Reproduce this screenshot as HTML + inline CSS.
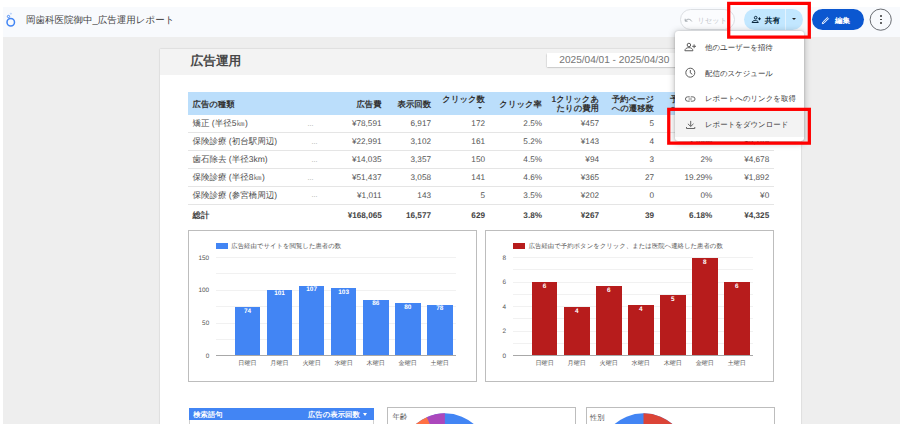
<!DOCTYPE html>
<html lang="ja">
<head>
<meta charset="utf-8">
<title>岡歯科医院御中_広告運用レポート</title>
<style>
*{margin:0;padding:0;box-sizing:border-box}
html,body{width:903px;height:424px;overflow:hidden;background:#fff}
body{position:relative;font-family:"Liberation Sans",sans-serif;color:#555;text-rendering:geometricPrecision}
.a{position:absolute}
.t{position:absolute;white-space:nowrap;height:12px;line-height:12px}
.r{text-align:right}
.b{font-weight:bold}
#hdr{left:3px;top:7px;width:897px;height:30px;background:#f8fafd}
#bg{left:3px;top:37px;width:897px;height:387px;background:#eeeeee}
#page{left:160px;top:49px;width:641.2px;height:380px;background:#fff;box-shadow:0 0 1.5px rgba(0,0,0,.22)}
#band{left:160px;top:49px;width:641.2px;height:25.5px;background:#f3f3f3}
/* table */
.th{font-size:8.4px;font-weight:bold;color:#333}
.td{font-size:8.5px;color:#4d4d4d}
.n{font-size:8.2px;color:#555}
.tot{font-size:8.2px;color:#444;font-weight:bold}
.sep{position:absolute;left:188px;width:586px;height:1px;background:#e5e5e5}
.dots{font-size:7px;color:#999}
/* charts */
.box{position:absolute;border:1px solid #bdbdbd;background:#fff}
.gl{position:absolute;height:1px;background:#f1f1f1}
.ax{font-size:6.4px;color:#555}
.bar1{position:absolute;background:#4285f4;width:25.5px}
.bar2{position:absolute;background:#b71c1c;width:25.5px}
.bl{position:absolute;font-size:6.4px;font-weight:bold;color:#fff;width:25.5px;text-align:center;height:8px;line-height:8px;white-space:nowrap}
.xl{position:absolute;font-size:6.1px;color:#555;width:32px;text-align:center;height:8px;line-height:8px;white-space:nowrap}
/* menu */
#menu{left:675px;top:30.8px;width:128.7px;height:110.7px;background:#fff;border-radius:3px;box-shadow:0 1.5px 7px rgba(0,0,0,.3),0 0 1.5px rgba(0,0,0,.22)}
.mi{font-size:7.45px;color:#383838;left:705px}
</style>
</head>
<body>
<div class="a" id="hdr"></div>
<div class="a" id="bg"></div>

<!-- header: logo + title -->
<svg class="a" style="left:4px;top:11px" width="16" height="18" viewBox="0 0 16 18">
  <circle cx="6.75" cy="11.2" r="3.75" fill="none" stroke="#4285f4" stroke-width="1.5"/>
  <circle cx="4.5" cy="5.5" r="1.15" fill="none" stroke="#4a8af4" stroke-width="1"/>
  <circle cx="6.9" cy="2.7" r="0.6" fill="none" stroke="#8ab4f8" stroke-width="0.55"/>
</svg>
<div class="t" style="left:26px;top:15px;font-size:9.5px;color:#444">岡歯科医院御中_広告運用レポート</div>

<!-- page -->
<div class="a" id="page"></div>
<div class="a" id="band"></div>
<div class="t b" style="left:190.5px;top:54.6px;font-size:12.7px;color:#484848">広告運用</div>
<div class="a" style="left:547.2px;top:53.3px;width:150px;height:13.3px;background:#fff;box-shadow:0 .5px 1.5px rgba(0,0,0,.4)"></div>
<div class="t" style="left:559.3px;top:54.5px;font-size:10.1px;color:#757575">2025/04/01 - 2025/04/30</div>

<!-- table 1 -->
<div class="a" style="left:188px;top:92px;width:586px;height:23px;background:#bbdefb"></div>
<div class="t th" style="left:192.5px;top:97.5px">広告の種類</div>
<div class="t th r" style="left:281.5px;width:100px;top:97.5px">広告費</div>
<div class="t th r" style="left:331px;width:100px;top:97.5px">表示回数</div>
<div class="t th r" style="left:385px;width:100px;top:93.2px">クリック数</div>
<div class="a" style="left:478px;top:106.6px;width:0;height:0;border-left:2.1px solid transparent;border-right:2.1px solid transparent;border-top:2.4px solid #333"></div>
<div class="t th r" style="left:442px;width:100px;top:97.5px">クリック率</div>
<div class="t th r" style="left:499px;width:100px;top:93.2px">1クリックあ</div>
<div class="t th r" style="left:499px;width:100px;top:101.9px">たりの費用</div>
<div class="t th r" style="left:554px;width:100px;top:93.2px">予約ページ</div>
<div class="t th r" style="left:554px;width:100px;top:101.9px">への遷移数</div>
<div class="t th r" style="left:612.3px;width:100px;top:93.2px">予約ページ</div>
<div class="t th r" style="left:612.3px;width:100px;top:101.9px">への遷移率</div>
<div class="t th r" style="left:669.2px;width:100px;top:93.2px">予約1件あ</div>
<div class="t th r" style="left:669.2px;width:100px;top:101.9px">たりの費用</div>

<!-- row 1 -->
<div class="t td" style="left:192.5px;top:117.1px">矯正 (半径5㎞)</div>
<div class="t dots" style="left:307.6px;top:118.8px">...</div>
<div class="t n r" style="left:281.5px;width:100px;top:117.8px">¥78,591</div>
<div class="t n r" style="left:331px;width:100px;top:117.8px">6,917</div>
<div class="t n r" style="left:385px;width:100px;top:117.8px">172</div>
<div class="t n r" style="left:442px;width:100px;top:117.8px">2.5%</div>
<div class="t n r" style="left:499px;width:100px;top:117.8px">¥457</div>
<div class="t n r" style="left:554px;width:100px;top:117.8px">5</div>
<div class="t n r" style="left:612.3px;width:100px;top:117.8px">2.91%</div>
<div class="t n r" style="left:669.2px;width:100px;top:117.8px">¥15,718</div>
<div class="sep" style="top:132.3px"></div>
<!-- row 2 -->
<div class="t td" style="left:192.5px;top:135px">保険診療 (初台駅周辺)</div>
<div class="t dots" style="left:311.6px;top:136.7px">...</div>
<div class="t n r" style="left:281.5px;width:100px;top:135.7px">¥22,991</div>
<div class="t n r" style="left:331px;width:100px;top:135.7px">3,102</div>
<div class="t n r" style="left:385px;width:100px;top:135.7px">161</div>
<div class="t n r" style="left:442px;width:100px;top:135.7px">5.2%</div>
<div class="t n r" style="left:499px;width:100px;top:135.7px">¥143</div>
<div class="t n r" style="left:554px;width:100px;top:135.7px">4</div>
<div class="t n r" style="left:612.3px;width:100px;top:135.7px">2.48%</div>
<div class="t n r" style="left:669.2px;width:100px;top:135.7px">¥5,748</div>
<div class="sep" style="top:150.1px"></div>
<!-- row 3 -->
<div class="t td" style="left:192.5px;top:152.8px">歯石除去 (半径3km)</div>
<div class="t dots" style="left:311.6px;top:154.5px">...</div>
<div class="t n r" style="left:281.5px;width:100px;top:153.5px">¥14,035</div>
<div class="t n r" style="left:331px;width:100px;top:153.5px">3,357</div>
<div class="t n r" style="left:385px;width:100px;top:153.5px">150</div>
<div class="t n r" style="left:442px;width:100px;top:153.5px">4.5%</div>
<div class="t n r" style="left:499px;width:100px;top:153.5px">¥94</div>
<div class="t n r" style="left:554px;width:100px;top:153.5px">3</div>
<div class="t n r" style="left:612.3px;width:100px;top:153.5px">2%</div>
<div class="t n r" style="left:669.2px;width:100px;top:153.5px">¥4,678</div>
<div class="sep" style="top:168px"></div>
<!-- row 4 -->
<div class="t td" style="left:192.5px;top:171.1px">保険診療 (半径8㎞)</div>
<div class="t dots" style="left:307.6px;top:172.8px">...</div>
<div class="t n r" style="left:281.5px;width:100px;top:171.8px">¥51,437</div>
<div class="t n r" style="left:331px;width:100px;top:171.8px">3,058</div>
<div class="t n r" style="left:385px;width:100px;top:171.8px">141</div>
<div class="t n r" style="left:442px;width:100px;top:171.8px">4.6%</div>
<div class="t n r" style="left:499px;width:100px;top:171.8px">¥365</div>
<div class="t n r" style="left:554px;width:100px;top:171.8px">27</div>
<div class="t n r" style="left:612.3px;width:100px;top:171.8px">19.29%</div>
<div class="t n r" style="left:669.2px;width:100px;top:171.8px">¥1,892</div>
<div class="sep" style="top:185.8px"></div>
<!-- row 5 -->
<div class="t td" style="left:192.5px;top:188.6px">保険診療 (参宮橋周辺)</div>
<div class="t dots" style="left:311.6px;top:190.3px">...</div>
<div class="t n r" style="left:281.5px;width:100px;top:189.9px">¥1,011</div>
<div class="t n r" style="left:331px;width:100px;top:189.9px">143</div>
<div class="t n r" style="left:385px;width:100px;top:189.9px">5</div>
<div class="t n r" style="left:442px;width:100px;top:189.9px">3.5%</div>
<div class="t n r" style="left:499px;width:100px;top:189.9px">¥202</div>
<div class="t n r" style="left:554px;width:100px;top:189.9px">0</div>
<div class="t n r" style="left:612.3px;width:100px;top:189.9px">0%</div>
<div class="t n r" style="left:669.2px;width:100px;top:189.9px">¥0</div>
<div class="sep" style="top:203.8px"></div>
<!-- total -->
<div class="t tot" style="left:192.5px;top:209px;font-size:8.4px">総計</div>
<div class="t tot r" style="left:281.8px;width:100px;top:209.7px">¥168,065</div>
<div class="t tot r" style="left:331px;width:100px;top:209.7px">16,577</div>
<div class="t tot r" style="left:385px;width:100px;top:209.7px">629</div>
<div class="t tot r" style="left:442px;width:100px;top:209.7px">3.8%</div>
<div class="t tot r" style="left:499px;width:100px;top:209.7px">¥267</div>
<div class="t tot r" style="left:554px;width:100px;top:209.7px">39</div>
<div class="t tot r" style="left:612.3px;width:100px;top:209.7px">6.18%</div>
<div class="t tot r" style="left:669.2px;width:100px;top:209.7px">¥4,325</div>

<!-- chart 1 -->
<div class="box" style="left:188px;top:230px;width:289.2px;height:151.7px"></div>
<div class="a" style="left:215.5px;top:242.8px;width:12.6px;height:6px;background:#4285f4"></div>
<div class="t ax" style="left:231.3px;top:241.3px">広告経由でサイトを閲覧した患者の数</div>
<div class="gl" style="left:215.5px;width:240px;top:257px"></div>
<div class="gl" style="left:215.5px;width:240px;top:273.4px"></div>
<div class="gl" style="left:215.5px;width:240px;top:289.8px"></div>
<div class="gl" style="left:215.5px;width:240px;top:306.2px"></div>
<div class="gl" style="left:215.5px;width:240px;top:322.6px"></div>
<div class="gl" style="left:215.5px;width:240px;top:339px"></div>
<div class="t ax r" style="left:159.2px;width:50px;top:252.5px">150</div>
<div class="t ax r" style="left:159.2px;width:50px;top:285.3px">100</div>
<div class="t ax r" style="left:159.2px;width:50px;top:318px">50</div>
<div class="t ax r" style="left:159.2px;width:50px;top:350.6px">0</div>
<div class="bar1" style="left:234.7px;top:307.4px;height:48.1px"></div>
<div class="bar1" style="left:266.8px;top:289.6px;height:65.9px"></div>
<div class="bar1" style="left:298.9px;top:285.7px;height:69.8px"></div>
<div class="bar1" style="left:330.9px;top:288.3px;height:67.2px"></div>
<div class="bar1" style="left:363px;top:299.5px;height:56px"></div>
<div class="bar1" style="left:395px;top:303.4px;height:52.1px"></div>
<div class="bar1" style="left:427px;top:304.7px;height:50.8px"></div>
<div class="a" style="left:215.5px;width:240px;top:355px;height:1px;background:#a8a8a8"></div>
<div class="bl" style="left:234.7px;top:307.9px">74</div>
<div class="bl" style="left:266.8px;top:290.1px">101</div>
<div class="bl" style="left:298.9px;top:285.7px">107</div>
<div class="bl" style="left:330.9px;top:288.8px">103</div>
<div class="bl" style="left:363px;top:300px">86</div>
<div class="bl" style="left:395px;top:303.9px">80</div>
<div class="bl" style="left:427px;top:305.2px">78</div>
<div class="xl" style="left:231.5px;top:360.2px">日曜日</div>
<div class="xl" style="left:263.5px;top:360.2px">月曜日</div>
<div class="xl" style="left:295.6px;top:360.2px">火曜日</div>
<div class="xl" style="left:327.6px;top:360.2px">水曜日</div>
<div class="xl" style="left:359.7px;top:360.2px">木曜日</div>
<div class="xl" style="left:391.7px;top:360.2px">金曜日</div>
<div class="xl" style="left:423.7px;top:360.2px">土曜日</div>

<!-- chart 2 -->
<div class="box" style="left:485.2px;top:230px;width:289px;height:151.7px"></div>
<div class="a" style="left:512.5px;top:242.8px;width:12.8px;height:6px;background:#b71c1c"></div>
<div class="t ax" style="left:528.7px;top:241.3px">広告経由で予約ボタンをクリック、または医院へ連絡した患者の数</div>
<div class="gl" style="left:512.5px;width:240px;top:257px"></div>
<div class="gl" style="left:512.5px;width:240px;top:269.3px"></div>
<div class="gl" style="left:512.5px;width:240px;top:281.5px"></div>
<div class="gl" style="left:512.5px;width:240px;top:293.8px"></div>
<div class="gl" style="left:512.5px;width:240px;top:306px"></div>
<div class="gl" style="left:512.5px;width:240px;top:318.3px"></div>
<div class="gl" style="left:512.5px;width:240px;top:330.5px"></div>
<div class="gl" style="left:512.5px;width:240px;top:342.8px"></div>
<div class="t ax r" style="left:456px;width:50px;top:252.5px">8</div>
<div class="t ax r" style="left:456px;width:50px;top:277px">6</div>
<div class="t ax r" style="left:456px;width:50px;top:301.5px">4</div>
<div class="t ax r" style="left:456px;width:50px;top:326px">2</div>
<div class="t ax r" style="left:456px;width:50px;top:350.6px">0</div>
<div class="bar2" style="left:531.9px;top:282.4px;height:73.1px"></div>
<div class="bar2" style="left:564px;top:306.8px;height:48.7px"></div>
<div class="bar2" style="left:596px;top:285.9px;height:69.6px"></div>
<div class="bar2" style="left:628px;top:305px;height:50.5px"></div>
<div class="bar2" style="left:660px;top:294.8px;height:60.7px"></div>
<div class="bar2" style="left:692px;top:257.9px;height:97.6px"></div>
<div class="bar2" style="left:724px;top:282.4px;height:73.1px"></div>
<div class="a" style="left:512.5px;width:240px;top:355px;height:1px;background:#a8a8a8"></div>
<div class="bl" style="left:531.9px;top:283.4px">6</div>
<div class="bl" style="left:564px;top:307.8px">4</div>
<div class="bl" style="left:596px;top:286.9px">6</div>
<div class="bl" style="left:628px;top:306px">4</div>
<div class="bl" style="left:660px;top:295.8px">5</div>
<div class="bl" style="left:692px;top:258.9px">8</div>
<div class="bl" style="left:724px;top:283.4px">6</div>
<div class="xl" style="left:528.6px;top:360.2px">日曜日</div>
<div class="xl" style="left:560.7px;top:360.2px">月曜日</div>
<div class="xl" style="left:592.7px;top:360.2px">火曜日</div>
<div class="xl" style="left:624.7px;top:360.2px">水曜日</div>
<div class="xl" style="left:656.8px;top:360.2px">木曜日</div>
<div class="xl" style="left:688.8px;top:360.2px">金曜日</div>
<div class="xl" style="left:720.8px;top:360.2px">土曜日</div>

<!-- bottom: table 2 + pies -->
<div class="a" style="left:188.6px;top:407.6px;width:185px;height:20px;border:1px solid #d0d0d0;background:#fff"></div>
<div class="a" style="left:188.6px;top:407.6px;width:185px;height:12.6px;background:#4285f4"></div>
<div class="t b" style="left:193.3px;top:409px;font-size:7.3px;color:#fff">検索語句</div>
<div class="t b" style="left:307.9px;top:409px;font-size:7.4px;color:#fff">広告の表示回数</div>
<div class="a" style="left:363.3px;top:413.4px;width:0;height:0;border-left:2.6px solid transparent;border-right:2.6px solid transparent;border-top:3px solid #fff"></div>

<div class="box" style="left:387.3px;top:407px;width:188.4px;height:30px;overflow:hidden"></div>
<div class="t" style="left:392.6px;top:411px;font-size:7.3px;color:#555">年齢</div>
<svg class="a" style="left:395px;top:408px" width="100" height="16" viewBox="395 408 100 16">
  <circle cx="444.9" cy="457.6" r="44.3" fill="#4285f4"/>
  <path d="M444.9 457.6 L444.9 413.3 A44.3 44.3 0 0 0 426.8 417.2 Z" fill="#ab47bc"/>
  <path d="M444.9 457.6 L426.8 417.2 A44.3 44.3 0 0 0 405 438 Z" fill="#ff7043"/>
</svg>
<div class="box" style="left:586.2px;top:407px;width:188.4px;height:30px"></div>
<div class="t" style="left:590px;top:411.5px;font-size:7.3px;color:#555">性別</div>
<svg class="a" style="left:595px;top:408px" width="100" height="16" viewBox="595 408 100 16">
  <circle cx="643.5" cy="457.6" r="44.3" fill="#4285f4"/>
  <path d="M643.5 457.6 L643.5 413.3 A44.3 44.3 0 0 1 687.8 457.6 Z" fill="#db4437"/>
</svg>

<!-- header buttons -->
<div class="a" style="left:680px;top:9px;width:55px;height:21.2px;border:1px solid #dcdfe3;border-radius:10.6px;background:#fbfcfe"></div>
<svg class="a" style="left:683.5px;top:15.5px" width="9" height="8" viewBox="0 0 9 8">
  <path d="M1.2 2.8 L1.2 5.2 L3.6 5.2" fill="none" stroke="#9aa0a6" stroke-width="0.9"/>
  <path d="M1.5 4.9 C3 2.6 6.2 2.6 7.8 5.4" fill="none" stroke="#9aa0a6" stroke-width="0.9"/>
</svg>
<div class="t" style="left:697.6px;top:14.6px;font-size:7.2px;color:#c0c4c9">リセット</div>

<div class="a" style="left:744px;top:9px;width:59px;height:21.3px;border-radius:10.7px;background:#c2e7ff"></div>
<div class="a" style="left:785.3px;top:9px;width:1px;height:21.3px;background:#e3f3ff"></div>
<svg class="a" style="left:750.5px;top:15px" width="11" height="9" viewBox="0 0 11 9">
  <circle cx="4.7" cy="2.7" r="1.35" fill="none" stroke="#001d35" stroke-width="0.95"/>
  <path d="M1.1 7.5 C1.1 4.9 7.3 4.9 7.3 7.5 Z" fill="none" stroke="#001d35" stroke-width="0.95" stroke-linejoin="round"/>
  <path d="M8.5 2.4 V5.2 M7.1 3.8 H9.9" stroke="#001d35" stroke-width="0.95"/>
</svg>
<div class="t b" style="left:764.8px;top:14.7px;font-size:7.6px;color:#001d35">共有</div>
<div class="a" style="left:791.9px;top:18.1px;width:0;height:0;border-left:2.7px solid transparent;border-right:2.7px solid transparent;border-top:2.6px solid #1f1f1f"></div>

<div class="a" style="left:812px;top:9px;width:52px;height:21.3px;border-radius:10.7px;background:#0b57d0"></div>
<svg class="a" style="left:821px;top:15.5px" width="9" height="9" viewBox="0 0 9 9">
  <path d="M1.3 7.7 L1.6 6.2 L6.3 1.5 L7.5 2.7 L2.8 7.4 Z" fill="#4c86e0" stroke="#fff" stroke-width="0.95" stroke-linejoin="round"/>
</svg>
<div class="t b" style="left:834.9px;top:14.8px;font-size:7.5px;color:#fff">編集</div>

<svg class="a" style="left:868px;top:7px" width="26" height="26" viewBox="0 0 26 26"><circle cx="12.7" cy="12.65" r="10.6" fill="#f8fafd" stroke="#50545a" stroke-width="0.85"/></svg>
<div class="a" style="left:879.9px;top:15.4px;width:1.7px;height:1.7px;border-radius:1px;background:#333"></div>
<div class="a" style="left:879.9px;top:18.7px;width:1.7px;height:1.7px;border-radius:1px;background:#333"></div>
<div class="a" style="left:879.9px;top:22px;width:1.7px;height:1.7px;border-radius:1px;background:#333"></div>

<!-- dropdown menu -->
<div class="a" id="menu"></div>
<div class="a" style="left:675px;top:111.3px;width:128.7px;height:26.2px;background:#f3f3f3"></div>
<svg class="a" style="left:683.5px;top:42.1px" width="13" height="11" viewBox="0 0 13 11">
  <circle cx="4.9" cy="3" r="1.75" fill="none" stroke="#5c5c5c" stroke-width="1"/>
  <path d="M0.9 8.75 C0.9 4.6 8.9 4.6 8.9 8.75 Z" fill="none" stroke="#5c5c5c" stroke-width="1" stroke-linejoin="round"/>
  <path d="M10.1 2.4 V6.2 M8.2 4.3 H12" stroke="#5c5c5c" stroke-width="1"/>
</svg>
<div class="t mi" style="top:41.9px">他のユーザーを招待</div>
<svg class="a" style="left:683.5px;top:67.2px" width="12" height="12" viewBox="0 0 12 12">
  <circle cx="6.3" cy="5.7" r="4.5" fill="none" stroke="#5c5c5c" stroke-width="1"/>
  <path d="M6.3 3 V5.9 L8.3 7.3" fill="none" stroke="#5c5c5c" stroke-width="1"/>
</svg>
<div class="t mi" style="top:68px">配信のスケジュール</div>
<svg class="a" style="left:683.5px;top:95px" width="13" height="8" viewBox="0 0 13 8">
  <rect x="1.45" y="1.85" width="9.6" height="4.3" rx="2.15" fill="none" stroke="#666" stroke-width="1"/>
  <path d="M6.25 0.8 V2.6 M6.25 5.4 V7.2" stroke="#fff" stroke-width="1"/>
  <path d="M4.6 4 H7.9" stroke="#666" stroke-width="0.85"/>
</svg>
<div class="t mi" style="top:92.9px">レポートへのリンクを取得</div>
<svg class="a" style="left:684.5px;top:119.5px" width="11" height="10" viewBox="0 0 11 10">
  <path d="M5.7 0.9 V6.2 M2.9 3.8 L5.7 6.5 L8.5 3.8" fill="none" stroke="#666" stroke-width="1"/>
  <path d="M1.5 7 V8.5 H9.8 V7" fill="none" stroke="#666" stroke-width="1"/>
</svg>
<div class="t mi" style="top:119px">レポートをダウンロード</div>

<!-- red annotation rectangles -->
<svg class="a" style="left:0;top:0" width="903" height="424" viewBox="0 0 903 424">
  <rect x="728.7" y="3.4" width="80.6" height="33.7" fill="none" stroke="#ff0000" stroke-width="3.25"/>
  <rect x="668.75" y="109.35" width="140.6" height="33.8" fill="none" stroke="#ff0000" stroke-width="3.25"/>
</svg>
</body>
</html>
